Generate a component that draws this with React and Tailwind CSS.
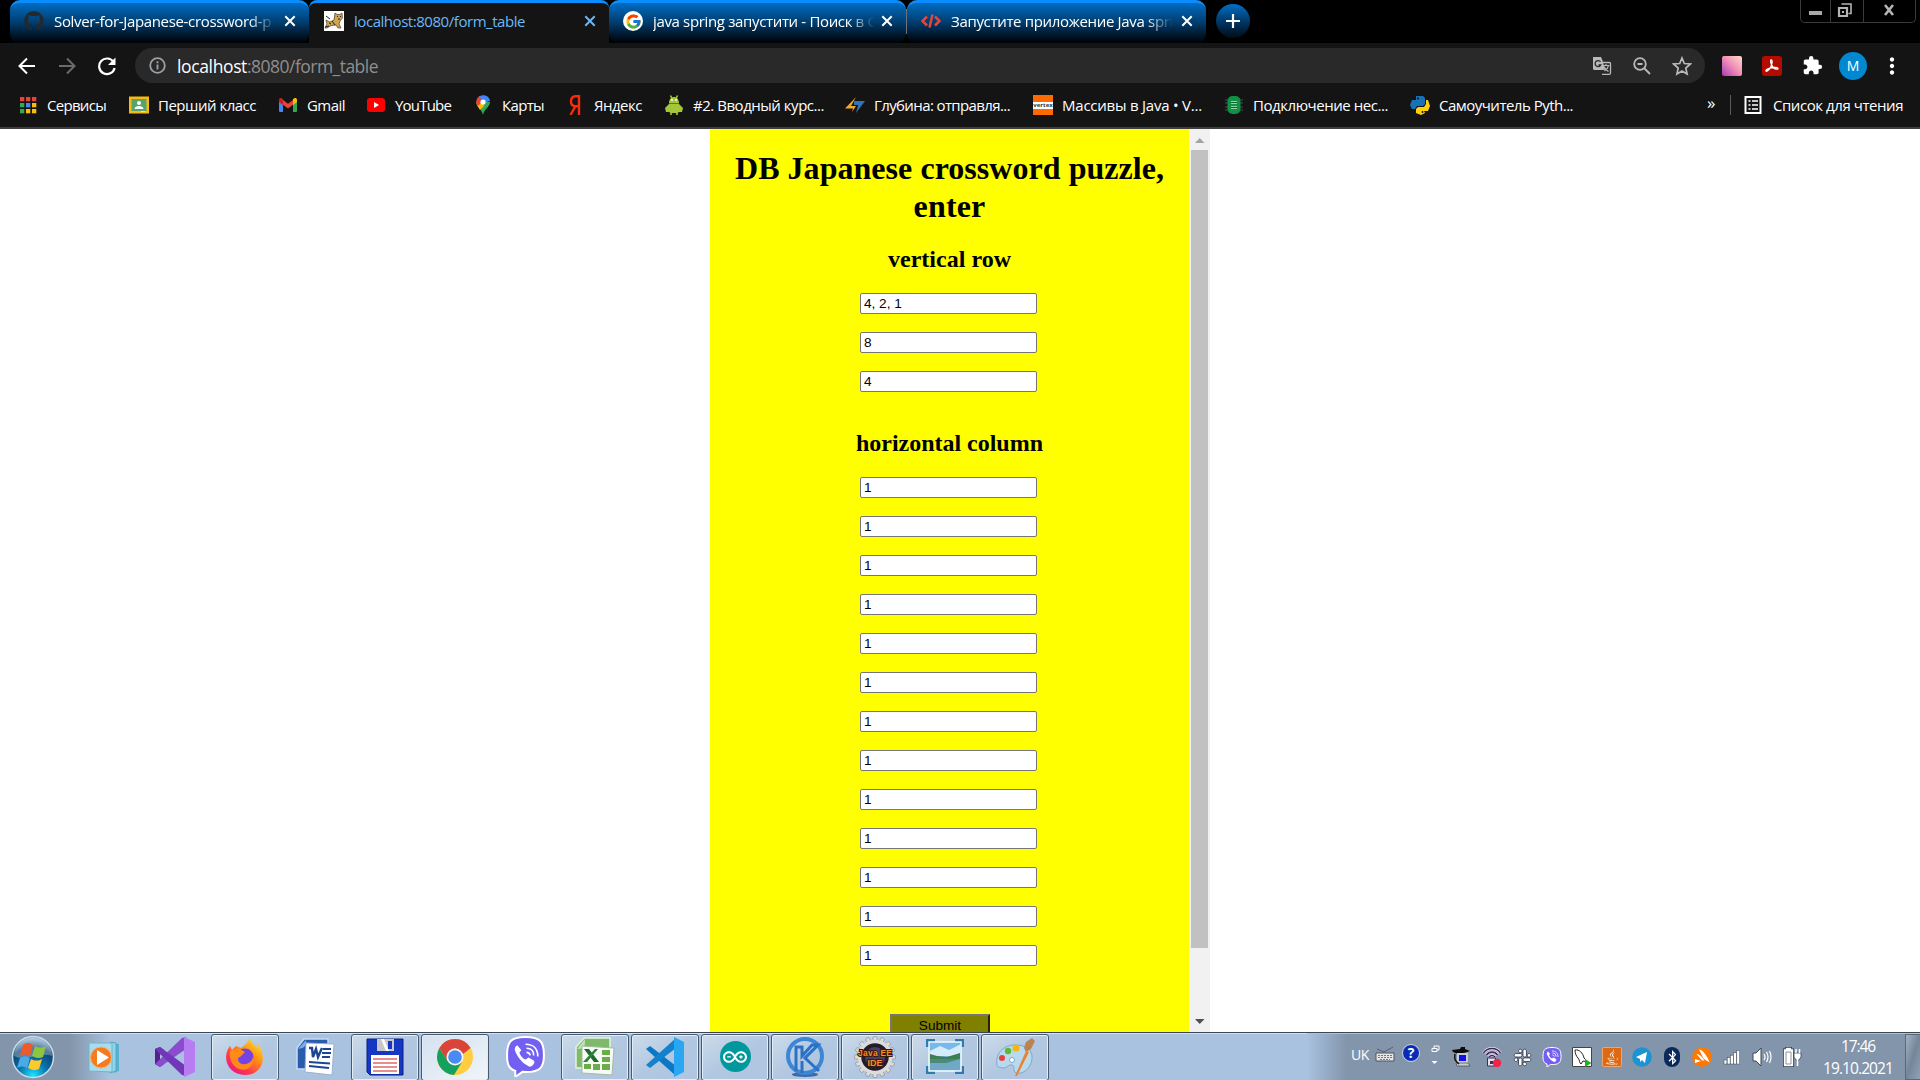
import React, { useLayoutEffect, useRef, useState } from "react";
import { FaGithub, FaSlack, FaBluetoothB, FaJava } from "react-icons/fa";
import { FcGoogle } from "react-icons/fc";
import { SiArduino } from "react-icons/si";
import { MdExtension, MdMoreVert } from "react-icons/md";

/* Text whose tracking is adjusted so that it fills exactly w pixels. */
function Fit({ w, className = "", children }) {
  const ref = useRef(null);
  const [ls, setLs] = useState(0);
  useLayoutEffect(() => {
    const nat = ref.current.getBoundingClientRect().width;
    setLs((w - nat) / String(children).length);
  }, [w, children]);
  return (
    <span ref={ref} className={"inline-block whitespace-pre " + className} style={{ letterSpacing: ls + "px" }}>
      {children}
    </span>
  );
}

const Svg = ({ s = 20, v = 20, className = "", children }) => (
  <svg width={s} height={s} viewBox={`0 0 ${v} ${v}`} fill="none" className={"shrink-0 " + className}>{children}</svg>
);

const Close = ({ c }) => (
  <Svg s={12} v={12} className="ml-auto">
    <path d="M1.3 1.3l9.4 9.4M10.7 1.3L1.3 10.7" stroke={c} strokeWidth="2" />
  </Svg>
);

const TomcatIcon = () => (
  <Svg>
    <path fill="#fff" d="M0 0h20v20H0z" />
    <path d="M11 2l2 1.5h3L18 2l.4 5-2.4 3-1 3 2 4h-3l-2-3-5 .5L3 17H1l2-4-1-4 4 2 4-2z" fill="#d2a550" stroke="#4b3a20" strokeWidth=".7" />
    <path d="M13 5l1 1M17 5l-1 1M14 8h2M5 12l2 1M1 16l4-1M2 5l4 3M8 10l3 4" stroke="#222" />
  </Svg>
);

const tabs = [
  { box: "w-[299px]", w: 217, t: "Solver-for-Japanese-crossword-p", icon: <FaGithub size={20} color="#24292e" /> },
  { box: "w-[300px]", w: 171, t: "localhost:8080/form_table", active: true, icon: <TomcatIcon /> },
  { box: "w-[297px]", w: 225, t: "java spring запустити - Поиск в G", icon: <span className="flex size-5 shrink-0 items-center justify-center rounded-full bg-white"><FcGoogle size={17} /></span> },
  { box: "w-[299px]", w: 222, t: "Запустите приложение Java spri", icon: <Svg><path d="M6 5.500L1.500 10L6 14.500M14 5.500L18.500 10L14 14.500M11.500 3.500L8.500 16.500" stroke="#e8453c" strokeWidth="2.500" /></Svg> },
];

function Tab({ t, w, icon, active, box }) {
  return (
    <div className={"flex h-[43px] items-center border-t-[3px] border-[#0a8dff] pr-[13px] pb-[4px] " + box + " " +
      (active ? "rounded-t-[8px] bg-[#141414] pl-[15px]" : "rounded-t-[10px] rounded-b-[9px] bg-linear-to-b from-[#006dc4] via-[#003c6c] to-[#000408] pl-[14px]")}>
      {icon}
      <div className={"ml-[10px] w-[226px] shrink-0 overflow-hidden text-[15px] leading-6 " +
        (active ? "text-[#6cb8f7]" : "mask-r-from-86% mask-r-to-98% text-white")}>
        <Fit w={w}>{t}</Fit>
      </div>
      <Close c={active ? "#6cb8f7" : "#fff"} />
    </div>
  );
}

const grid = ["#ea4335", "#ea4335", "#ea4335", "#34a853", "#4285f4", "#fbbc05", "#34a853", "#fbbc05", "#fbbc05"];

const bookmarks = [
  { box: "w-[111px]", w: 59, t: "Сервисы", icon: <Svg>{grid.map((c, i) => <rect key={i} x={2 + (i % 3) * 6} y={2 + Math.floor(i / 3) * 6} width="4.300" height="4.300" fill={c} />)}</Svg> },
  { box: "w-[149px]", w: 98, t: "Перший класс", icon: <Svg><path fill="#f5ba14" d="M0 1.500h20v17H0z" /><path fill="#57a46b" d="M2.500 4h15v12h-15z" /><circle cx="10" cy="8" r="2" fill="#fff" /><path fill="#fff" d="M5.500 14c0-4 9-4 9 0z" /><path fill="#d9e8dc" d="M12 16h4v1h-4z" /></Svg> },
  { box: "w-[88px]", w: 38, t: "Gmail", icon: <Svg><path fill="#4285f4" d="M1 5l4 3v9H2q-1 0-1-1z" /><path fill="#34a853" d="M19 5l-4 3v9h3q1 0 1-1z" /><path fill="#ea4335" d="M3 3.500l7 5.300 7-5.300L16 9l-6 4.500L4 9z" /><path fill="#c5221f" d="M1 5c0-2 2-2.500 3.500-1.300L5 4v6L1 7z" /><path fill="#fbbc04" d="M19 5c0-2-2-2.500-3.500-1.300L15 4v6l4-3z" /></Svg> },
  { box: "w-[107px]", w: 56, t: "YouTube", icon: <Svg><rect x="1" y="3" width="18" height="14" rx="3" fill="#f00" /><path d="M8 7l5 3-5 3z" fill="#fff" /></Svg> },
  { box: "w-[92px]", w: 42, t: "Карты", icon: <Svg><path fill="#34a853" d="M10 20C9 14 3 12 3 7h14c0 5-6 7-7 13z" /><path fill="#fbbc04" d="M4 10l6-5 1 6-4 4z" /><path fill="#ea4335" d="M3.200 8C3 4 5 2 7 .800L10 6l-5 5z" /><path fill="#4285f4" d="M6 1.500C11-1.500 16.500 1 17 6l-6 2z" /><circle cx="10" cy="7" r="2.600" fill="#fff" /></Svg> },
  { box: "w-[99px]", w: 48, t: "Яндекс", icon: <Svg><path d="M14 0v20M14 1.300h-3.500q-4.500 0-4.500 5t4.500 5H14M10.500 11L5.500 20" stroke="#fa2b0c" strokeWidth="2.400" /></Svg> },
  { box: "w-[181px]", w: 131, t: "#2. Вводный курс...", icon: <Svg><path d="M5 8c0-8 10-8 10 0zM5 9h10l4 4-1 4h-3l-2 1H7l-2-1H2l-1-4z" fill="#a4c639" /><path d="M6.500.500l1.500 3M13.500.500l-1.500 3M7 16v4M13 16v4" stroke="#a4c639" strokeWidth="1.600" /><path d="M5 8.500h10" stroke="#5d7a18" /><circle cx="8" cy="5" r="1" fill="#fff" /><circle cx="12" cy="5" r="1" fill="#fff" /></Svg> },
  { box: "w-[188px]", w: 136, t: "Глубина: отправля...", icon: <Svg><path fill="#f6a821" d="M11 2L0 13.500h8L7 17l4-6H6z" /><path fill="#3272b8" d="M9 6h11l-9 12 2-8H9z" /></Svg> },
  { box: "w-[191px]", w: 140, t: "Массивы в Java • V...", icon: <span className="flex size-5 shrink-0 flex-col justify-center bg-[#ff6a00]"><span className="bg-white text-center text-[6px] leading-[7px] font-bold text-[#333]">vertex</span></span> },
  { box: "w-[186px]", w: 135, t: "Подключение нес...", icon: <Svg><path d="M1 5h18M1 8h18M1 12h18M1 15h18" stroke="#333c3a" strokeWidth="1.500" /><rect x="3.500" y="1" width="13" height="18" rx="5" fill="#119143" /><path d="M7 6h6v3H7zM7 11h6v3H7z" fill="#8fd3a8" /><path d="M7 7.500h6M7 12.500h6" stroke="#145c32" /></Svg> },
  { box: "w-[280px]", w: 134, t: "Самоучитель Pyth...", icon: <Svg><path fill="#1872b8" d="M6 1h7l2 2v6l-2 2H7l-2 3H2L0 10l2-5h4z" /><path fill="#ffd10d" d="M8 12h6l2-3V5h2l2 6-2 5h-4l1 2-4 2-5-2v-4z" /><circle cx="8" cy="3.500" r="1" fill="#111" /><circle cx="12.500" cy="17" r="1" fill="#111" /></Svg> },
];

const Field = ({ v }) => (
  <input readOnly value={v} className="block h-[21px] w-[177px] rounded-[2px] border border-[#767676] bg-white px-[3px] font-['Liberation_Sans',sans-serif] text-[13.6px] text-black" />
);

function TaskButton({ open, bright, children }) {
  return (
    <div className={"flex h-[47px] w-[68px] shrink-0 items-center justify-center rounded-[3px] pb-[2px] " +
      (open ? "border border-[#4a5a6e] shadow-[inset_0_0_0_1px_#e3edf7] " : "border border-transparent ") +
      (bright ? "bg-linear-to-br from-[#d4e1ef] to-[#f0f5fa]" : open ? "bg-linear-to-br from-[#cddbea] via-[#b2c8e1] to-[#afc5e0]" : "")}>
      {children}
    </div>
  );
}

const ViberMark = ({ s }) => (
  <Svg s={s} v={40}>
    <path d="M20 1C5 1 2 6 2 19c0 9 2 13 8 15v6l7-5c17 1 21-4 21-16C38 6 35 1 20 1z" fill="#7360f2" stroke="#fff" strokeWidth="2" />
    <path d="M12 9c-3 2-3 4-1 8 3 6 7 10 13 13 3 0 6-4 4-6l-5-3-3 2c-3-1-5-4-6-7l2-2z" fill="#fff" />
    <path d="M20 8c8 0 12 5 12 12M21 12c5 0 7 3 7 7M21 16q3 0 3.500 3" stroke="#fff" strokeWidth="1.600" />
  </Svg>
);

const teeth = Array.from({ length: 16 }, (_, i) => i * 22.5);

const apps = [
  [0, 0, <Svg s={36} v={36}><path d="M27 4l5 1v27l-5 2z" fill="#58b2d2" /><path d="M23 3l6 1v28l-6 2z" fill="#8fd4e8" stroke="#5aa5c0" /><path d="M2 4h23v29L2 32z" fill="#a8dcec" stroke="#6cb6ce" /><circle cx="14" cy="18.500" r="10.500" fill="#f47b20" stroke="#f9b070" /><path d="M10 11l12 7.500L10 26z" fill="#fff" /></Svg>],
  [0, 0, <Svg s={42} v={42}><path d="M1 13l5-2 4 3v14l-4 3-5-3z" fill="#52218a" /><path d="M6 18l5 4-5 5z" fill="#a8c2df" /><path d="M1 28L28 2l4-1v12L6 31z" fill="#8b4bcf" /><path d="M1 13l5-2 26 19v10l-4-1z" fill="#7237b8" /><path d="M30 1l11 5v30l-11 5z" fill="#b77cf2" /></Svg>],
  [1, 0, <Svg s={40} v={40}><defs><linearGradient id="ff" x1="1" y1="0" x2=".2" y2="1"><stop stopColor="#fff44f" /><stop offset=".4" stopColor="#ff980e" /><stop offset=".75" stopColor="#ff3750" /><stop offset="1" stopColor="#e31587" /></linearGradient></defs><path d="M25 1c1 5 4 6 7 9 1-2 1-3 1-3 10 13 4 31-13 31C6 38-3 25 3 12l2-3 2 4 4-4 5 2c3-2 6-5 9-10z" fill="url(#ff)" /><circle cx="20" cy="20" r="8.500" fill="#7542e5" /><path d="M5 14l8-3 7 4-5 5c-3 0-3 5 2 7 5 1 10-2 11-7 3 8-6 15-14 12C7 29 4 22 5 14z" fill="#ff8a16" /></Svg>],
  [0, 0, <Svg s={40} v={40}><path d="M9 2h24v30H2V11z" fill="#2a5cae" stroke="#c5dcf5" strokeWidth="1.500" /><path d="M3 12c7-1 8-3 8-9" fill="#7daee8" /><path d="M11 6l28 1-2 31-27-3z" fill="#fff" stroke="#9ab2d0" /><path d="M14 11h3l1 9 3-8 2 8 4-9" stroke="#1d4691" strokeWidth="2.400" /><path d="M28 12h8M27 16h9M27 20h8M14 25l21 1.500M14 29l20 2" stroke="#1d4691" strokeWidth="2.200" /></Svg>],
  [1, 0, <Svg s={38} v={38}><path d="M1 1h36v36H4l-3-3z" fill="#1537c4" stroke="#0a1e80" /><path d="M11 1h17v12H11z" fill="#c8c8c8" /><path d="M15 1l5 12h3L18 1z" fill="#fff" /><path d="M22 3h4v8h-4z" fill="#1537c4" /><path d="M5 17h28v19H5z" fill="#fff" /><path d="M7 21h24M7 25h24M7 29h24M7 33h24" stroke="#e06a6a" strokeWidth="1.400" /></Svg>],
  [1, 1, <Svg s={38} v={38}><circle cx="19" cy="19" r="18" fill="#ffcd40" /><path d="M3.400 10A18 18 0 0 1 34.600 10L27 16 19 10Z" fill="#d9453a" /><path d="M3.400 10A18 18 0 0 0 18 37l8-13-7 3-8-5z" fill="#14a05d" /><path d="M3.400 10L11 22l2-8 6-4h15.600L19 6z" fill="#d9453a" /><circle cx="19" cy="19" r="8.500" fill="#f4f4f4" /><circle cx="19" cy="19" r="6.800" fill="#4a8af4" /></Svg>],
  [0, 0, <ViberMark s={41} />],
  [1, 0, <Svg s={40} v={40}><path d="M9 1h26v30H1V10z" fill="#7fba6a" stroke="#e4f3dd" strokeWidth="1.500" /><path d="M2 12c8 0 8-3 8-10" fill="#c2e2b6" /><path d="M7 9l32 2-2 27-30-2z" fill="#f7faf5" stroke="#a0bba0" /><path d="M27 13h8v5h-8zM27 20h8v5h-8zM27 27h8v6h-8zM18 27h7v6h-7zM9 27h7v5H9z" fill="#6aad4a" /><path d="M9 12h5l10 13h-5z" fill="#1f6b2c" /><path d="M20 12h3L12 25H8z" fill="#2f8038" /></Svg>],
  [1, 0, <Svg s={40} v={40}><path d="M1 12l4-3 26 20v10z" fill="#0a78c4" /><path d="M1 28l4 3L31 11V1z" fill="#1481cc" /><path d="M29 0l10 5v30l-10 5z" fill="#29a7f3" /></Svg>],
  [1, 0, <span className="flex size-[31px] items-center justify-center rounded-full bg-[#00979d]"><SiArduino size={24} color="#fff" /></span>],
  [1, 0, <Svg s={40} v={40}><ellipse cx="20" cy="37.500" rx="13" ry="2.500" fill="#3d69a4" /><circle cx="20" cy="19" r="17" stroke="#3b86d6" strokeWidth="4" /><path d="M11 34V10h6v9l10-11h6L20 21l14 13M17 24v12" stroke="#2c72c4" strokeWidth="3" /></Svg>],
  [1, 0, <Svg s={42} v={42}>{teeth.map((a) => <rect key={a} x="19" y=".500" width="4" height="6" rx="1" fill="#dcdcdc" stroke="#777" strokeWidth=".5" transform={`rotate(${a} 21 21)`} />)}<circle cx="21" cy="21" r="15.500" fill="#221c2c" stroke="#dcdcdc" strokeWidth="3.500" /><circle cx="21" cy="21" r="10" fill="#45406a" /><text x="21" y="20" textAnchor="middle" fontFamily="Liberation Sans, sans-serif" fontWeight="bold" fontSize="8.500" textLength="34" fill="#f98a2b" stroke="#3a1a08" strokeWidth="2" paintOrder="stroke">Java EE</text><text x="21" y="30" textAnchor="middle" fontFamily="Liberation Sans, sans-serif" fontWeight="bold" fontSize="9" fill="#f98a2b" stroke="#3a1a08" strokeWidth="2" paintOrder="stroke">IDE</text></Svg>],
  [1, 0, <Svg s={38} v={38}><path d="M0 1h9v8H0zM29 1h9v8h-9zM0 28h9v8H0zM29 28h9v8h-9z" fill="#2e7cae" /><path d="M3 4h32v29H3z" fill="#78b9ec" stroke="#f4fafd" strokeWidth="1.500" /><path d="M4 13l10-5 9 4 12-6v12H4z" fill="#d5ebfa" /><path d="M4 16l7 2 10 1 13-4v7H4z" fill="#3f7d55" /><path d="M4 21h30v11H4z" fill="#6fa9c4" /><path d="M4 21h30l-14 4H4z" fill="#4c8a7c" /></Svg>],
  [1, 0, <Svg s={40} v={40}><path d="M2 28C0 16 9 8 20 8c11 0 18 5 17 14s-9 16-16 14c-4-2 0-7-4-8s-6 4-9 3-5 0-6-3z" fill="#b9daee" stroke="#7aa9cb" /><circle cx="7" cy="21" r="3" fill="#e8413c" /><circle cx="13" cy="14" r="3.200" fill="#5fb832" /><circle cx="21" cy="11" r="3.500" fill="#f7b512" /><circle cx="17" cy="23" r="2.500" fill="#fff" stroke="#7aa9cb" /><path d="M31 14l3 1-12 24h-2z" fill="#e9832b" /><path d="M31 5l6-4 3 3-4 8-5 3-2-4z" fill="#b98352" /></Svg>],
];

const tray = [
  <Svg><path d="M0 3l8-1 1-2h4v2l5 2-6 2-6 1-5-2z" fill="#0b0b0b" /><path d="M6 7h9v8H6z" fill="#1010f0" stroke="#c9ccd0" strokeWidth="2" /><path d="M4 16h12l2 3H5z" fill="#c9ccd0" stroke="#333" strokeWidth=".6" /><path d="M3 7c-1 5 0 7 4 10" stroke="#111" strokeWidth="1.500" /></Svg>,
  <Svg><path d="M1.500 6c4-6 13-6 17 0M4.500 8c3-4 8-4 11 0M7 10c2-2 4-2 6 0" stroke="#e6dfea" strokeWidth="3" /><path d="M1.500 6c4-6 13-6 17 0M4.500 8c3-4 8-4 11 0M7 10c2-2 4-2 6 0" stroke="#3f2a5e" strokeWidth="1.500" /><path d="M5.500 11h8v8h-8z" fill="#e6dfea" stroke="#3f2a5e" /><path d="M8 14h3v3H8z" fill="#3f2a5e" /><circle cx="15" cy="16" r="4.200" fill="#f32246" /></Svg>,
  <FaSlack size={19} color="#fff" stroke="#3c4654" strokeWidth="26" />,
  <ViberMark s={20} />,
  <Svg><path d="M.500.500h19v19H.500z" fill="#fff" stroke="#444" /><path d="M3 3c4-1 8 3 9 8l4 4-5-1-2 3c-2-1-1-4-3-6S3 6 3 3z" stroke="#222" /><path d="M13 12l6.500 4-6.500 4z" fill="#1db31d" /></Svg>,
  <span className="flex size-5 items-center justify-center rounded-[2px] border border-[#f0a468] bg-[#dd6a12]"><FaJava size={16} color="#fff" /></span>,
  <Svg><circle cx="10" cy="10" r="9.800" fill="#1c93d2" /><path d="M4 10l11-5-2 11-3-3-2 2v-3z" fill="#fff" /></Svg>,
  <span className="flex h-5 w-4 items-center justify-center rounded-full bg-[#0a2a5c]"><FaBluetoothB size={15} color="#fff" /></span>,
  <Svg><circle cx="10" cy="10" r="9.800" fill="#ff7800" /><path d="M7 2.500c4 0 9 8 10.500 13l-6-4zM4.500 7c3 0 6 3 8 7l-3-1zM3 12l6 2-6 2z" fill="#fff" /></Svg>,
  <Svg>{[0, 1, 2, 3, 4].map((i) => <rect key={i} x={2 + i * 3.2} y={13 - i * 2.4} width="2.900" height={4 + i * 2.4} fill="#fff" stroke="#3c4654" strokeWidth=".5" />)}</Svg>,
  <Svg><path d="M1 6h3l5-5v18l-5-5H1z" fill="#fff" stroke="#3c4654" /><path d="M12 7q2 3 0 6M14.500 5q3 5 0 10M17.500 4q3 6 0 12" stroke="#fff" strokeWidth="1.200" /></Svg>,
  <Svg><path d="M2.500 3h2V1.500h4V3h2v15.500h-8z" stroke="#2d3744" strokeWidth="3" /><path d="M2.500 3h2V1.500h4V3h2v15.500h-8z" fill="#fff" stroke="#fff" strokeWidth="1.400" /><path d="M4 5h5v12H4z" fill="#fff" stroke="#667" strokeWidth=".7" /><path d="M12 6h7v4l-2 3h-3l-2-3z" fill="#fff" stroke="#2d3744" strokeWidth=".7" /><path d="M15.500 12v7M14 2v4M17.500 2v4" stroke="#fff" strokeWidth="1.500" /></Svg>,
];

export default function App() {
  return (
    <div className="flex h-[1080px] w-[1920px] flex-col overflow-hidden bg-white font-['Open_Sans','Noto_Sans',sans-serif]">
      <div className="flex h-[43px] shrink-0 items-start bg-black pl-[10px]">
        {tabs.map((t, i) => (
          <React.Fragment key={t.t}>
            {i === 3 && <span className="z-10 mt-[9px] h-[25px] w-px bg-[#6b7480]" />}
            <Tab {...t} />
          </React.Fragment>
        ))}
        <div className="mt-1 ml-[10px] flex size-[34px] items-center justify-center rounded-full bg-linear-to-b from-[#006fc8] to-[#000c18]">
          <Svg s={16} v={16}><path d="M8 1v14M1 8h14" stroke="#fff" strokeWidth="2.200" /></Svg>
        </div>
        <div className="mr-1 ml-auto flex h-[23px] w-[116px] rounded-b-[5px] border border-t-0 border-[#3a3a3a]">
          <div className="flex w-[30px] items-center justify-center border-r border-[#3a3a3a] pr-px"><span className="mt-1 h-1 w-[13px] bg-[#a8a8a8]" /></div>
          <div className="flex w-[33px] items-center justify-center border-r border-[#3a3a3a] pr-[5px] pb-px">
            <Svg s={15} v={15}><path d="M4.500 1h9.500v9.500h-2.500" stroke="#b4b4b4" strokeWidth="1.600" /><path d="M2 5h8v8H2z" stroke="#b4b4b4" strokeWidth="2.200" /><path d="M5 8h2v2H5z" fill="#b4b4b4" /></Svg>
          </div>
          <div className="flex flex-1 items-center justify-center pr-[2px] pb-[2px]"><Svg s={12} v={12}><path d="M2 1l8 10M10 1L2 11" stroke="#b4b4b4" strokeWidth="2.600" /></Svg></div>
        </div>
      </div>

      <div className="flex h-[45px] shrink-0 items-center bg-[#141414] text-white">
        <Svg className="ml-[17px]"><path d="M18 10H3M10 2.500L2.500 10l7.500 7.500" stroke="#fff" strokeWidth="2" /></Svg>
        <Svg className="ml-5"><path d="M2 10h15M10 2.500l7.500 7.500-7.500 7.500" stroke="#6b6b6b" strokeWidth="2" /></Svg>
        <Svg className="ml-5"><path d="M16.500 6A7.800 7.800 0 1 0 17.600 12" stroke="#fff" strokeWidth="2.200" /><path d="M18.500 1.500v7.500h-7.500z" fill="#fff" /></Svg>
        <div className="ml-[18px] flex h-[35px] w-[1570px] items-center rounded-full bg-[#292929] pl-[14px]">
          <Svg s={17} v={17}><circle cx="8.500" cy="8.500" r="7.300" stroke="#9aa0a6" strokeWidth="1.800" /><path d="M8.500 7.500v5M8.500 4.300v2" stroke="#9aa0a6" strokeWidth="1.900" /></Svg>
          <div className="ml-[11px] text-[17.5px] leading-6">
            <Fit w={70}>localhost</Fit><Fit w={131} className="text-[#8f8f8f]">:8080/form_table</Fit>
          </div>
          <div className="mr-[13px] ml-auto flex items-center gap-5 text-[#b9b9b9]">
            <Svg><path d="M1 1h8l1.500 3.500L13 14H2.500Q1 14 1 12.500z" fill="#b9b9b9" /><path d="M8 6.500h9.500q1 0 1 1V17q0 1.300-1.300 1.300H10" stroke="#b9b9b9" strokeWidth="1.300" /><path d="M8.500 5.800A3 3 0 1 0 8.800 9H6.500" stroke="#292929" strokeWidth="1.300" /><path d="M10.500 9.500h7M14 8v1.500M16.500 9.500c-.5 3-2.500 4.500-4 5.500M12 10.500c1 2.500 3 4 4.500 5" stroke="#b9b9b9" strokeWidth="1.200" /></Svg>
            <Svg><circle cx="8" cy="8" r="5.800" stroke="#b9b9b9" strokeWidth="1.800" /><path d="M12 12l6 6M5.500 8h5" stroke="#b9b9b9" strokeWidth="1.800" /></Svg>
            <Svg><path d="M10 2l2.300 5.500 6 .500-4.500 4 1.300 6L10 15l-5.100 3 1.300-6-4.500-4 6-.500z" stroke="#b9b9b9" strokeWidth="1.700" /></Svg>
          </div>
        </div>
        <span className="ml-[17px] size-5 rounded-[2px] bg-linear-to-tr from-[#a43aae] via-[#f08cb8] to-[#ffd9c8]" />
        <span className="ml-5 flex size-5 items-center justify-center rounded-[3px] bg-[#b30b00]">
          <Svg s={16} v={16}><path d="M7 2c2 0 1 4 0 6.500S3 14 2 13s3-3 7-3.500 5 .500 5 1.200-3 .800-5-1.500S6 2 7 2z" stroke="#fff" strokeWidth="1.300" /></Svg>
        </span>
        <MdExtension size={21} className="ml-5" />
        <span className="ml-[16px] flex size-7 items-center justify-center rounded-full bg-[#0288d1] text-[14px]">M</span>
        <MdMoreVert size={26} className="ml-[12px]" />
      </div>

      <div className="flex h-[39px] shrink-0 items-center bg-[#141414] pb-[5px] pl-[18px] text-[15px] text-white">
        {bookmarks.map((b) => (
          <div key={b.t} className={"flex shrink-0 items-center " + b.box}>
            {b.icon}
            <Fit w={b.w} className="ml-[9px] leading-6">{b.t}</Fit>
          </div>
        ))}
        <span className="ml-[17px] w-[23px] pb-1 text-[17px] leading-5">»</span>
        <span className="h-5 w-px bg-[#5a5a5a]" />
        <Svg className="ml-[12px]"><path d="M2.500 2h15v16h-15z" stroke="#fff" strokeWidth="2" /><path d="M5.500 6h2M5.500 10h2M5.500 14h2M9 6h6M9 10h6M9 14h6" stroke="#fff" strokeWidth="1.700" /></Svg>
        <Fit w={130} className="ml-[10px] leading-6">Список для чтения</Fit>
      </div>
      <div className="h-[2px] shrink-0 bg-[#3f3f3f]" />

      <div className="flex h-[903px] shrink-0 overflow-hidden pl-[710px]">
        <div className="flex w-[479px] shrink-0 flex-col items-center overflow-hidden bg-[#ffff00] font-['Liberation_Serif',serif] text-black">
          <h1 className="mt-[21px] flex flex-col items-center text-[32px] leading-[37px] font-bold">
            <Fit w={429}>DB Japanese crossword puzzle,</Fit>
            <Fit w={72} className="pt-px">enter</Fit>
          </h1>
          <h2 className="mt-[21px] text-[24px] leading-[27px] font-bold"><Fit w={123}>vertical row</Fit></h2>
          <div className="mt-[20px] mr-[2px] flex flex-col gap-[18px]">
            {["4, 2, 1", "8", "4"].map((v, i) => <Field key={i} v={v} />)}
          </div>
          <h2 className="mt-[38px] text-[24px] leading-[27px] font-bold"><Fit w={187}>horizontal column</Fit></h2>
          <div className="mt-[20px] mr-[2px] flex flex-col gap-[18px]">
            {Array.from({ length: 13 }, (_, i) => <Field key={i} v="1" />)}
          </div>
          <button className="mt-[48px] mr-[19px] h-6 w-[100px] shrink-0 border-2 border-t-[#767676] border-r-[#212121] border-b-[#212121] border-l-[#767676] bg-[#808000] font-['Liberation_Sans',sans-serif] text-[13.6px] leading-[17px]"><span className="block h-[18px]">Submit</span></button>
        </div>
        <div className="flex w-[21px] flex-col items-center bg-[#f1f1f1]">
          <Svg s={20} className="mt-px"><path d="M5 13h9.500L9.750 8z" fill="#a3a3a3" /></Svg>
          <div className="h-[798px] w-[17px] bg-[#c1c1c1]" />
          <Svg s={20} className="mt-auto"><path d="M5 7h9.500L9.750 12z" fill="#505050" /></Svg>
        </div>
      </div>

      <div className="flex h-[48px] shrink-0 items-start border-t border-[#3c4653] bg-linear-to-r from-[#8395ab] via-[#8395ab] via-[70px] to-[#a8c2df] to-[110px]">
        <div className="flex h-[47px] w-[71px] items-center justify-center border-t border-[#c6d3e2] pr-[5px] pb-px">
          <Svg s={44} v={44}>
            <defs><radialGradient id="orb" cx=".5" cy=".95" r=".9"><stop stopColor="#1ce3ff" /><stop offset=".4" stopColor="#0a70aa" /><stop offset=".75" stopColor="#0d4272" /><stop offset="1" stopColor="#8fb3cf" /></radialGradient></defs>
            <circle cx="22" cy="22" r="20.500" fill="url(#orb)" stroke="#c8dbe8" strokeWidth="1.500" />
            <path d="M3 21C4-3 40-3 41 21 31 16 14 27 3 21z" fill="#fff" opacity=".3" />
            <path d="M12 10c4-3 7-2 10 0l-3 11c-3-2-6-2-10 0z" fill="#f0592a" />
            <path d="M24 11c4 2 7 2 11 0l-3 11c-4 2-7 1-11-1z" fill="#8cc63e" />
            <path d="M9 23c4-2 7-2 10 0l-3 10c-3-2-6-2-10 0z" fill="#4aa9e8" />
            <path d="M20 24c4 2 7 2 11 0l-3 10c-4 2-7 1-11-1z" fill="#fdc92d" />
          </Svg>
        </div>
        <div className="flex flex-1 gap-[2px] border-t border-[#d3e1ef]">
          {apps.map(([open, bright, icon], i) => <TaskButton key={i} open={open} bright={bright}>{icon}</TaskButton>)}
        </div>
        <div className="flex h-[47px] w-[613px] items-center border-t border-[#b5c1cf] bg-linear-to-r from-[#a8c2df] to-[#8395ab] to-[40px] text-white">
          <Fit w={18} className="mb-[6px] ml-[44px] text-[14px]">UK</Fit>
          <Svg s={20} className="mb-[5px] ml-[6px]"><path d="M2 4l7 3 9-5" stroke="#555f6b" /><path d="M1 8h18v8H1z" fill="#e6e6e6" stroke="#4b5560" /><path d="M3 10.500h14M3 12.500h14M5 14.500h10" stroke="#777" strokeDasharray="2 1" /></Svg>
          <span className="mb-[8px] ml-[7px] flex size-[18px] items-center justify-center rounded-full border border-[#cfd6ea] bg-[#0a2bb5] text-[14px] leading-none font-bold">?</span>
          <Svg s={20} className="mb-[7px] ml-[9px]"><path d="M5 2h5v4H5z" stroke="#fff" /><path d="M3 4.500h5v3H3z" fill="#8395ab" stroke="#fff" /><path d="M2.500 17h6l-3 3z" fill="#fff" /></Svg>
          <div className="-ml-[2px] flex">
            {tray.map((icon, i) => <div key={i} className="flex w-[30px] items-center justify-center">{icon}</div>)}
          </div>
          <div className="ml-[16px] flex flex-col items-center text-[15.5px] leading-[22px]">
            <Fit w={34}>17:46</Fit><Fit w={70}>19.10.2021</Fit>
          </div>
          <div className="ml-auto h-[46px] w-[15px] border border-r-0 border-[#5b6878] bg-linear-to-br from-[#a4b2c3] via-[#76869a] to-[#8fa2b6]" />
        </div>
      </div>
    </div>
  );
}
